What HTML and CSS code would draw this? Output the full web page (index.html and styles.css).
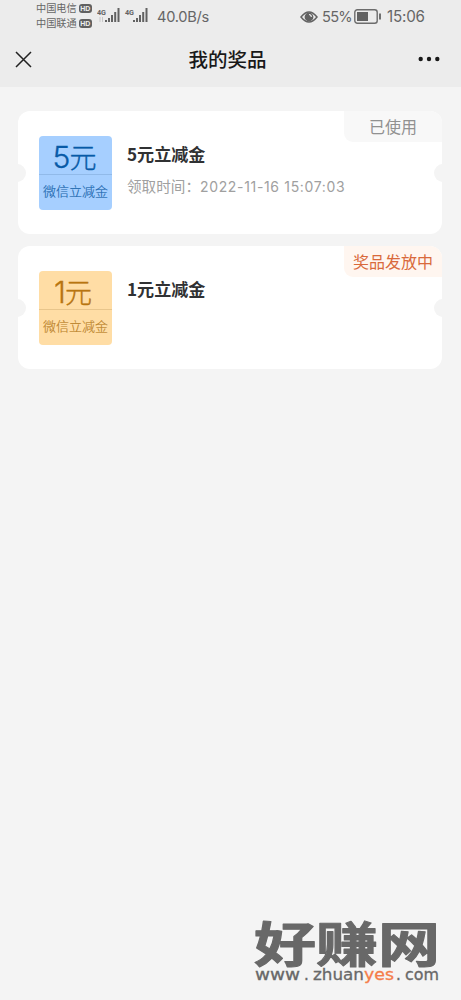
FILE: index.html
```html
<!DOCTYPE html>
<html lang="zh-CN">
<head>
<meta charset="utf-8">
<title>我的奖品</title>
<link rel="stylesheet" href="styles.css">
</head>
<body>
<div class="top">
  <div class="status">
    <div class="carriers">
      <div class="carrier">中国电信<span class="hd">HD</span></div>
      <div class="carrier">中国联通<span class="hd">HD</span></div>
    </div>
    <svg class="signals" width="52" height="18" viewBox="0 0 52 18">
      <g id="signal" fill="#626262">
        <text x="0" y="8" class="net" textLength="9" lengthAdjust="spacingAndGlyphs">4G</text>
        <rect x="8" y="13" width="2" height="2"/><rect x="11" y="11" width="2" height="4"/><rect x="14" y="8" width="2" height="7"/><rect x="17.2" y="5" width="2" height="10"/><rect x="20.5" y="1" width="2" height="14"/>
      </g>
      <path d="M3 10v5M5.5 10v5" stroke="#c8c8c8" stroke-width="1"/>
      <use href="#signal" x="28"/>
    </svg>
    <span class="speed">40.0B/s</span>
    <div class="status-right">
      <svg width="18" height="12" viewBox="0 0 18 12"><path d="M1 6Q9-4 17 6Q9 16 1 6Z" fill="none" stroke="#626262" stroke-width="1.5"/><circle cx="9" cy="6" r="4.4" fill="#626262"/><path d="M9 3.5A2.4 2.4 0 0 1 11.3 6" fill="none" stroke="#eee" stroke-width="1.2"/></svg>
      <span class="percent">55%</span>
      <svg class="battery" width="28" height="15" viewBox="0 0 28 15"><rect x=".8" y=".8" width="22.4" height="13.4" rx="2.5" fill="none" stroke="#6c6c6c" stroke-width="1.4"/><rect x="3" y="3" width="11" height="9" fill="#626262"/><path d="M26 4.5v6" stroke="#626262" stroke-width="1.8"/></svg>
      <span class="clock">15:06</span>
    </div>
  </div>
  <div class="nav">
    <svg width="17" height="17" viewBox="0 0 17 17"><path d="M1 1L16 16M16 1L1 16" stroke="#222" stroke-width="1.5"/></svg>
    <h1>我的奖品</h1>
    <svg width="22" height="6" viewBox="0 0 22 6" fill="#191919"><circle cx="2.7" cy="3" r="2.2"/><circle cx="11" cy="3" r="2.2"/><circle cx="19.3" cy="3" r="2.2"/></svg>
  </div>
</div>
<main class="list">
  <section class="card">
    <div class="coupon blue"><div class="amount"><span>5</span>元</div><div class="kind">微信立减金</div></div>
    <div class="info"><h2>5元立减金</h2><p>领取时间：<span class="date">2022-11-16 15:07:03</span></p></div>
    <div class="tag used">已使用</div>
  </section>
  <section class="card">
    <div class="coupon gold"><div class="amount"><span>1</span>元</div><div class="kind">微信立减金</div></div>
    <div class="info"><h2>1元立减金</h2></div>
    <div class="tag pending">奖品发放中</div>
  </section>
</main>
<svg class="watermark" width="190" height="76" viewBox="0 0 190 76">
  <text class="brand" x="3" y="51" textLength="186" lengthAdjust="spacingAndGlyphs">好赚网</text>
  <g class="site">
    <text x="4" y="69" textLength="45" lengthAdjust="spacingAndGlyphs">www</text>
    <text x="53" y="69">.</text>
    <text x="62" y="69" textLength="51" lengthAdjust="spacingAndGlyphs">zhuan</text>
    <text class="yes" x="113" y="69" textLength="30" lengthAdjust="spacingAndGlyphs">yes</text>
    <text x="145" y="69">.</text>
    <text x="154" y="69" textLength="34" lengthAdjust="spacingAndGlyphs">com</text>
  </g>
</svg>
</body>
</html>
```
FILE: styles.css
```css
* { box-sizing: border-box; }
body { margin: 0; min-height: 1000px; position: relative; background: #f4f4f4; font-family: "Noto Sans CJK SC", sans-serif; color: #303133; }
h1, h2, p { margin: 0; }
.top { height: 87px; background: #ececec; }
.status { height: 32px; padding: 0 36px 0; display: flex; align-items: center; color: #666; font-family: Inter, "Noto Sans CJK SC", sans-serif; }
.carriers { width: 57px; }
.carrier { display: flex; align-items: center; gap: 2px; height: 15px; font-size: 10.2px; line-height: 15px; white-space: nowrap; }
.hd { width: 13px; height: 9px; border-radius: 3px; background: #606060; color: #eee; font: bold 7px/9px "Liberation Sans", sans-serif; text-align: center; }
.signals { margin-left: 4px; margin-top: 0; }
.net { font: bold 8px Roboto, sans-serif; }
.speed { margin-left: 8px; margin-top: 1px; font-size: 14.6px; letter-spacing: -.25px; }
.status-right { margin-left: auto; margin-top: 1px; display: flex; align-items: center; }
.percent { margin-left: 4px; width: 32px; font-size: 14.6px; letter-spacing: -.7px; }
.battery { margin-right: 5px; }
.clock { width: 38px; font-size: 15.2px; letter-spacing: -.2px; }
.nav { height: 54px; padding: 0 21px 0 15px; display: flex; align-items: center; justify-content: space-between; }
.nav h1 { font-size: 19.5px; line-height: 28px; margin-left: 5px; font-weight: 500; color: #191919; }
.list { padding: 24px 19px 0 18px; display: grid; gap: 12px; }
.card { position: relative; height: 123px; padding: 25px 21px; display: flex; gap: 15px; background: #fff; border-radius: 12px; overflow: hidden; }
.card::before, .card::after { content: ""; position: absolute; top: 53px; width: 18px; height: 18px; border-radius: 50%; background: #f4f4f4; }
.card::before { left: -10px; }
.card::after { right: -10px; }
.coupon { width: 73px; height: 74px; border-radius: 4px; text-align: center; white-space: nowrap; }
.amount { height: 39px; border-bottom: 1px solid; font-size: 27px; line-height: 42px; font-weight: 300; -webkit-text-stroke: .35px currentColor; }
.amount span { font-family: Inter, sans-serif; font-size: 30px; margin-right: -1px; margin-left: -2px; }
.kind { font-size: 13px; line-height: 31px; font-weight: 300; -webkit-text-stroke: .15px currentColor; }
.blue { background: #a6cfff; color: #1966ad; }
.blue .amount { border-color: #91bae9; color: #075aa7; }
.gold { background: #ffdda5; color: #b98025; }
.gold .amount { border-color: #e8c58b; color: #b87510; }
.gold .amount span { margin-left: -5px; }
.info h2 { font-size: 17.1px; line-height: 24px; margin-top: 6px; font-weight: 700; }
.info p { margin-top: 10px; font-size: 14.6px; line-height: 20px; color: #a0a0a0; white-space: nowrap; }
.date { font-family: Inter, sans-serif; font-size: 14px; letter-spacing: .66px; }
.tag { position: absolute; right: 0; top: 0; width: 98px; height: 31px; border-bottom-left-radius: 9px; text-align: center; font-size: 16px; line-height: 30px; }
.used { background: #f8f8f8; color: #919191; }
.pending { background: #fff6f0; color: #d96a3c; }
.watermark { position: absolute; left: 251px; top: 911px; overflow: visible; }
.brand { font: 700 48px "Noto Sans CJK SC", sans-serif; fill: #686868; stroke: #686868; stroke-width: 1px; stroke-linejoin: round; }
.site { font: 500 15px "DejaVu Sans", sans-serif; fill: #686868; stroke: #686868; stroke-width: .3px; }
.yes { fill: #f47d4a; stroke: #f47d4a; }
```
